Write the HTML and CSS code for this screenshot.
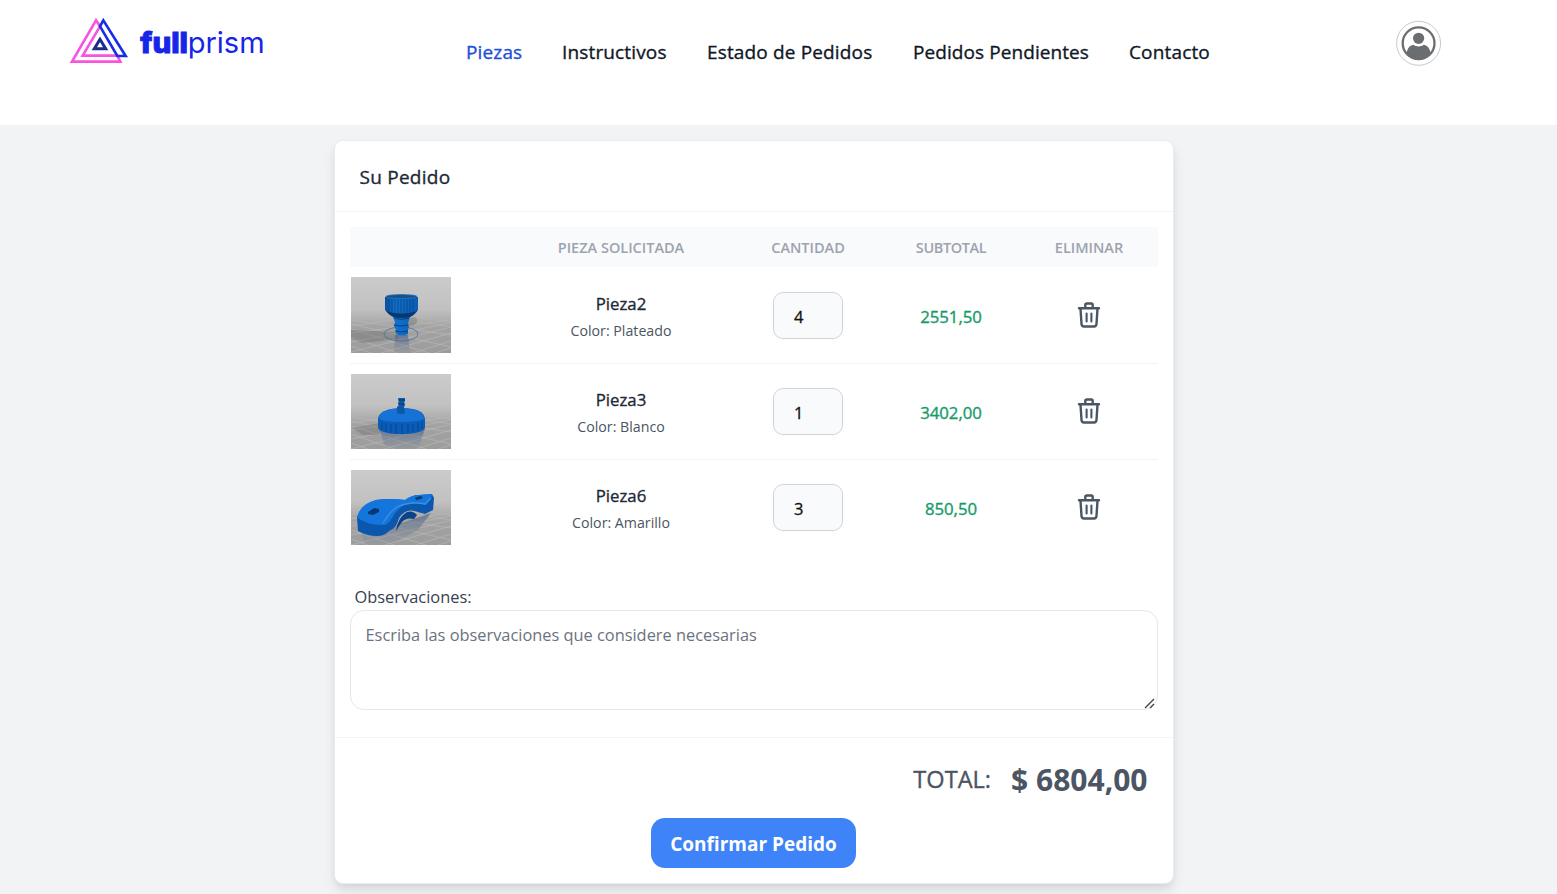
FILE: index.html
```html
<!DOCTYPE html>
<html lang="es">
<head>
<meta charset="utf-8">
<title>fullprism - Su Pedido</title>
<link rel="stylesheet" href="styles.css">
</head>
<body>
<header class="topbar">
  <svg class="logo" viewBox="0 0 660 210" role="img" aria-label="fullprism">
    <g fill="none" stroke-width="8">
      <path stroke="#f953e0" d="M108 46 36 170H181L172 152H68L120 64Z"/>
      <path stroke="#172ee8" d="M130 46 197 153H172L120 64Z"/>
      <path stroke="#1d2d8a" stroke-width="9" d="M120 103 103 131H137Z"/>
    </g>
    <text class="logo-full" x="241" y="144" textLength="143" lengthAdjust="spacingAndGlyphs">full</text>
    <text class="logo-prism" x="383" y="144" textLength="231" lengthAdjust="spacingAndGlyphs">prism</text>
  </svg>
  <nav class="nav">
    <a class="n1 active">Piezas</a>
    <a class="n2">Instructivos</a>
    <a class="n3">Estado de Pedidos</a>
    <a class="n4">Pedidos Pendientes</a>
    <a class="n5">Contacto</a>
  </nav>
  <svg class="avatar" viewBox="0 0 46 46">
    <circle cx="22.600" cy="23.300" r="22" fill="#fff" stroke="#bbb" stroke-width=".8"/>
    <circle cx="22.600" cy="23.300" r="15.900" fill="#fff" stroke="#6b6e71" stroke-width="2.300"/>
    <path fill="#6b6e71" d="M10.500 33.500c.8-5 3-8 6.800-8.800 3 2.300 7.600 2.300 10.600 0 3.800.8 6 3.800 6.800 8.800-6 7.500-18 7.500-24.200 0z"/>
    <circle cx="22.600" cy="18.300" r="5.600" fill="#6b6e71"/>
  </svg>
</header>

<svg class="defs" width="0" height="0">
  <defs>
    <linearGradient id="scene" x2="0" y2="1"><stop offset="0" stop-color="#cbcbcb"/><stop offset=".42" stop-color="#c1c1c1"/><stop offset=".65" stop-color="#a3a3a3"/><stop offset="1" stop-color="#9c9c9c"/></linearGradient>
    <linearGradient id="blue"><stop offset="0" stop-color="#0a4d9c"/><stop offset=".3" stop-color="#1272d0"/><stop offset="1" stop-color="#0a5cb4"/></linearGradient>
    <linearGradient id="fade" x2="0" y2="1"><stop offset=".4" stop-color="#000"/><stop offset=".7" stop-color="#fff"/></linearGradient>
    <linearGradient id="reflect" x2="0" y2="1"><stop offset="0" stop-color="#4d6388" stop-opacity=".7"/><stop offset="1" stop-color="#6f7e96" stop-opacity=".1"/></linearGradient>
    <mask id="floor"><rect width="100" height="76" fill="url(#fade)"/></mask>
    <g id="grid"><rect width="100" height="76" fill="url(#scene)"/>
      <path mask="url(#floor)" fill="none" stroke="#c6c6c6" stroke-width=".6" opacity=".75" d="M0 43 100 58M0 47 100 70M0 52 78 76M0 60 46 76M0 69 20 76M20 38 100 50M40 37 100 45M100 43 0 56M100 46 0 65M100 50 0 75M100 56 30 76M100 64 62 76M100 71 84 76M80 38 0 49"/>
    </g>
    <symbol id="trash" viewBox="0 0 24 26"><g fill="none" stroke="#4b5563" stroke-width="2.400" stroke-linecap="round" stroke-linejoin="round"><path d="M2 6.300h20M8.300 6V3q0-1.500 1.500-1.500h4.400q1.500 0 1.500 1.500v3M3.500 6.500l1 15.500q.2 2.500 2.500 2.500h10q2.300 0 2.500-2.500l1-15.500"/><path stroke-width="2.100" d="M9.600 11.500v8M14.400 11.500v8"/></g></symbol>
  </defs>
</svg>

<main class="card">
  <h1 class="card-title"><span>Su Pedido</span></h1>
  <section class="order">
    <div class="row head"><span></span><span>PIEZA SOLICITADA</span><span>CANTIDAD</span><span class="narrow">SUBTOTAL</span><span>ELIMINAR</span></div>
    <div class="row item">
      <svg class="thumb" viewBox="0 0 100 76">
        <use href="#grid"/>
        <path fill="#656565" opacity=".35" d="M0 53 45 55 48 62 12 66 0 61zM55 43q10-6 11 0t-11 6z"/>
        <ellipse cx="50" cy="57" rx="17" ry="7" fill="none" stroke="#386a9d" stroke-width=".7"/>
        <path fill="url(#reflect)" d="M44 58h13l2 18H43z"/>
        <path fill="url(#blue)" d="M34 20q16-5 33 0v13q-3 5-8 7l-2 6 1 4-1 3v4q-7 3-12 0v-4l-2-4 1-4-2-5q-5-3-8-7z"/>
        <path stroke="#073f7d" stroke-width=".7" d="M38 22v14M41 22v14M44 22v14M47 22v14M50 22v14M53 22v14M56 22v14M59 22v14M62 22v14"/>
        <path fill="#07396e" d="M35 34q16 5 31 0-3 4-7 6-8 2-16 0-5-2-8-6z"/>
        <ellipse cx="50.500" cy="19.500" rx="15.500" ry="2" fill="#18518a" stroke="#2478c4" stroke-width=".7"/>
        <path fill="none" stroke="#073f7d" d="M43 41q7 3 15 0M43 48q7 2 14 0M44 54q7 2 13 0"/>
      </svg>
      <span class="piece"><b>Pieza2</b><small>Color: Plateado</small></span>
      <span class="qty">4</span><span class="sub">2551,50</span>
      <svg class="trash"><use href="#trash"/></svg>
    </div>
    <div class="row item">
      <svg class="thumb" viewBox="0 0 100 75">
        <use href="#grid"/>
        <path fill="#606060" opacity=".3" d="M1 54 29 49v12L12 61z"/>
        <path fill="url(#reflect)" d="M28 55h46l-7 20H35z"/>
        <path fill="#0a5cb7" d="M27 45q1-10 23-11 23 0 24 11v9q-4 6-24 6-19 0-23-6z"/>
        <path fill="#1672d6" d="M28 45q0-10 22-11 23 1 23 11-6 3-23 3-16 0-22-3z"/>
        <path stroke="#063f82" stroke-width=".8" d="M31 48v8M35 49v9M40 50v9M45 50v10M51 50v10M57 50v9M62 50v8M67 49v8M71 47v8"/>
        <path fill="#0d57a7" d="M47 24h7v3l-1 2 1 2-1 2 1 6q-4 2-8 0v-6l2-2-1-2 1-2z"/>
        <path stroke="#063873" d="M47 26h7M47 30h7"/>
      </svg>
      <span class="piece"><b>Pieza3</b><small>Color: Blanco</small></span>
      <span class="qty">1</span><span class="sub">3402,00</span>
      <svg class="trash"><use href="#trash"/></svg>
    </div>
    <div class="row item">
      <svg class="thumb" viewBox="0 0 100 75">
        <use href="#grid"/>
        <path fill="url(#reflect)" d="M10 62 45 55 80 43 67 60 38 75H14z"/>
        <path fill="#0a57ad" d="M6 47Q10 34 25 30q14-2 29 0 7-5 14-5l13-1 2 4-1 12-8 4-7-2q-12-5-19 6-3 11-10 13-4 5-12 5-10 0-19-5z"/>
        <path fill="#1476dd" d="M6 47Q10 34 25 30q14-2 29 0 7-5 14-5l13-1-1 5-5 6q-12-4-22 0-8 5-12 13-4 8-11 7Q13 54 6 47z"/>
        <path fill="none" stroke="#3b8fe2" stroke-width="1.300" d="M32 53q3-5 8-11 5-6 15-8 9-2 19 0l6-6"/>
        <path fill="#073a70" d="M17 42l6-4 5 1v3l-6 3-5-1zM64 28l5-2 3 1-2 2-5 1z"/>
        <path fill="#0a4389" d="M45 61q2-14 11-19 6-2 10 3l-3 4q-8-2-12 3-3 4-6 9z"/>
      </svg>
      <span class="piece"><b>Pieza6</b><small>Color: Amarillo</small></span>
      <span class="qty">3</span><span class="sub">850,50</span>
      <svg class="trash"><use href="#trash"/></svg>
    </div>
    <label class="obs-label"><span>Observaciones:</span></label>
    <div class="obs"><span>Escriba las observaciones que considere necesarias</span>
      <svg class="grip" viewBox="0 0 12 12"><path d="M1 11 10 2M6 11l4-4" stroke="#444" stroke-width="1.400"/></svg>
    </div>
  </section>
  <footer class="foot">
    <div class="total"><span class="total-label">TOTAL:</span><strong>$ 6804,00</strong></div>
    <button class="confirm"><span>Confirmar Pedido</span></button>
  </footer>
</main>
</body>
</html>
```
FILE: styles.css
```css
* { box-sizing: border-box; }
body { margin: 0; height: 894px; overflow: hidden; background: #f2f3f5; font-family: "Open Sans", "Noto Sans", sans-serif; color: #1f2937; }
.defs { display: block; height: 0; }
.topbar { height: 125px; background: #fff; display: flex; align-items: flex-start; }
.logo { width: 220px; height: 70px; margin: 5px 0 0 60px; flex: none; }
.logo text { font-family: Inter, Lato, sans-serif; font-size: 86px; fill: #1626e8; }
.logo .logo-full { font-weight: 800; stroke: #1626e8; stroke-width: 3px; }
.logo-prism { font-weight: 400; }
.nav { display: flex; gap: 40px; margin: 38px 0 0 186px; width: 930px; font-size: 19px; letter-spacing: .15px; line-height: 28px; color: #111827; white-space: nowrap; -webkit-text-stroke: .35px; }
.nav .active { color: #1d4fd8; }
.n1 { width: 56px; }
.n2 { width: 105px; }
.n3 { width: 166px; }
.n4 { width: 176px; letter-spacing: .08px; }
.avatar { width: 46px; height: 46px; margin-top: 20px; flex: none; }
.card { width: 838px; height: 742px; margin: 16px 0 0 335px; background: #fff; border-radius: 8px; box-shadow: 0 0 0 1px #e9ebee, 0 8px 14px rgba(0,0,0,.09), 0 3px 6px rgba(0,0,0,.06); }
.card-title { margin: 0; height: 71px; padding: 0 24.500px; border-bottom: 1px solid #f3f4f6; font-size: 19px; letter-spacing: .25px; font-weight: 400; line-height: 73px; -webkit-text-stroke: .35px; }
.order { padding: 15px 15px 0; height: 525px; }
.row { display: grid; grid-template-columns: 158px 226px 148px 138px 138px; align-items: center; justify-items: center; }
.head { height: 40px; background: #f9fafb; color: #9ca3af; font-size: 14.500px; font-weight: 600; }
.head .narrow { letter-spacing: -.4px; }
.item { height: 96px; border-bottom: 1px solid #f3f4f6; }
.item:nth-child(2) { height: 97px; }
.item:nth-child(4) { height: 95px; border: 0; }
.thumb { width: 100px; height: 75px; justify-self: start; margin-left: 1px; }
.item:nth-child(2) .thumb { height: 76px; }
.piece { display: flex; flex-direction: column; align-items: center; padding-top: 3px; }
.piece b { font-size: 16.800px; font-weight: 400; line-height: 28px; -webkit-text-stroke: .35px; }
.piece small { font-size: 14.200px; line-height: 26px; color: #4b5563; }
.qty { width: 70px; height: 47px; border: 1px solid #d1d5db; border-radius: 10px; background: #f9fafb; padding-left: 20px; font-size: 16.500px; line-height: 47px; color: #111; -webkit-text-stroke: .3px; }
.sub { color: #169b68; font-size: 16.800px; letter-spacing: -.05px; padding-top: 2px; -webkit-text-stroke: .35px; }
.item:nth-child(n+3) .sub { padding-top: 1px; }
.trash { width: 24px; height: 26px; }
.item:nth-child(n+3) .trash { margin-bottom: 2px; }
.obs-label { display: block; height: 55px; padding: 29px 0 0 4.500px; font-size: 16.400px; line-height: 25px; color: #374151; }
.obs { position: relative; height: 100px; border: 1px solid #e5e7eb; border-radius: 14px; padding: 11px 14.500px; font-size: 16.380px; line-height: 26px; color: #6b7280; }
.grip { position: absolute; right: 1px; bottom: 0; width: 12px; height: 12px; }
.foot { border-top: 1px solid #f3f4f6; height: 146px; display: flex; flex-direction: column; align-items: center; }
.total { align-self: flex-end; height: 80px; padding: 2px 25.500px 0 0; display: flex; align-items: center; gap: 20px; color: #4b5563; }
.total-label { font-size: 23.600px; -webkit-text-stroke: .35px; }
.total strong { font-size: 30px; font-weight: 700; }
.confirm { width: 205px; height: 50px; margin-right: 1px; padding: 2px 0 0; border: 0; border-radius: 14px; background: #3f83f8; color: #fff; font: 700 19px "Open Sans", sans-serif; white-space: nowrap; }
```
